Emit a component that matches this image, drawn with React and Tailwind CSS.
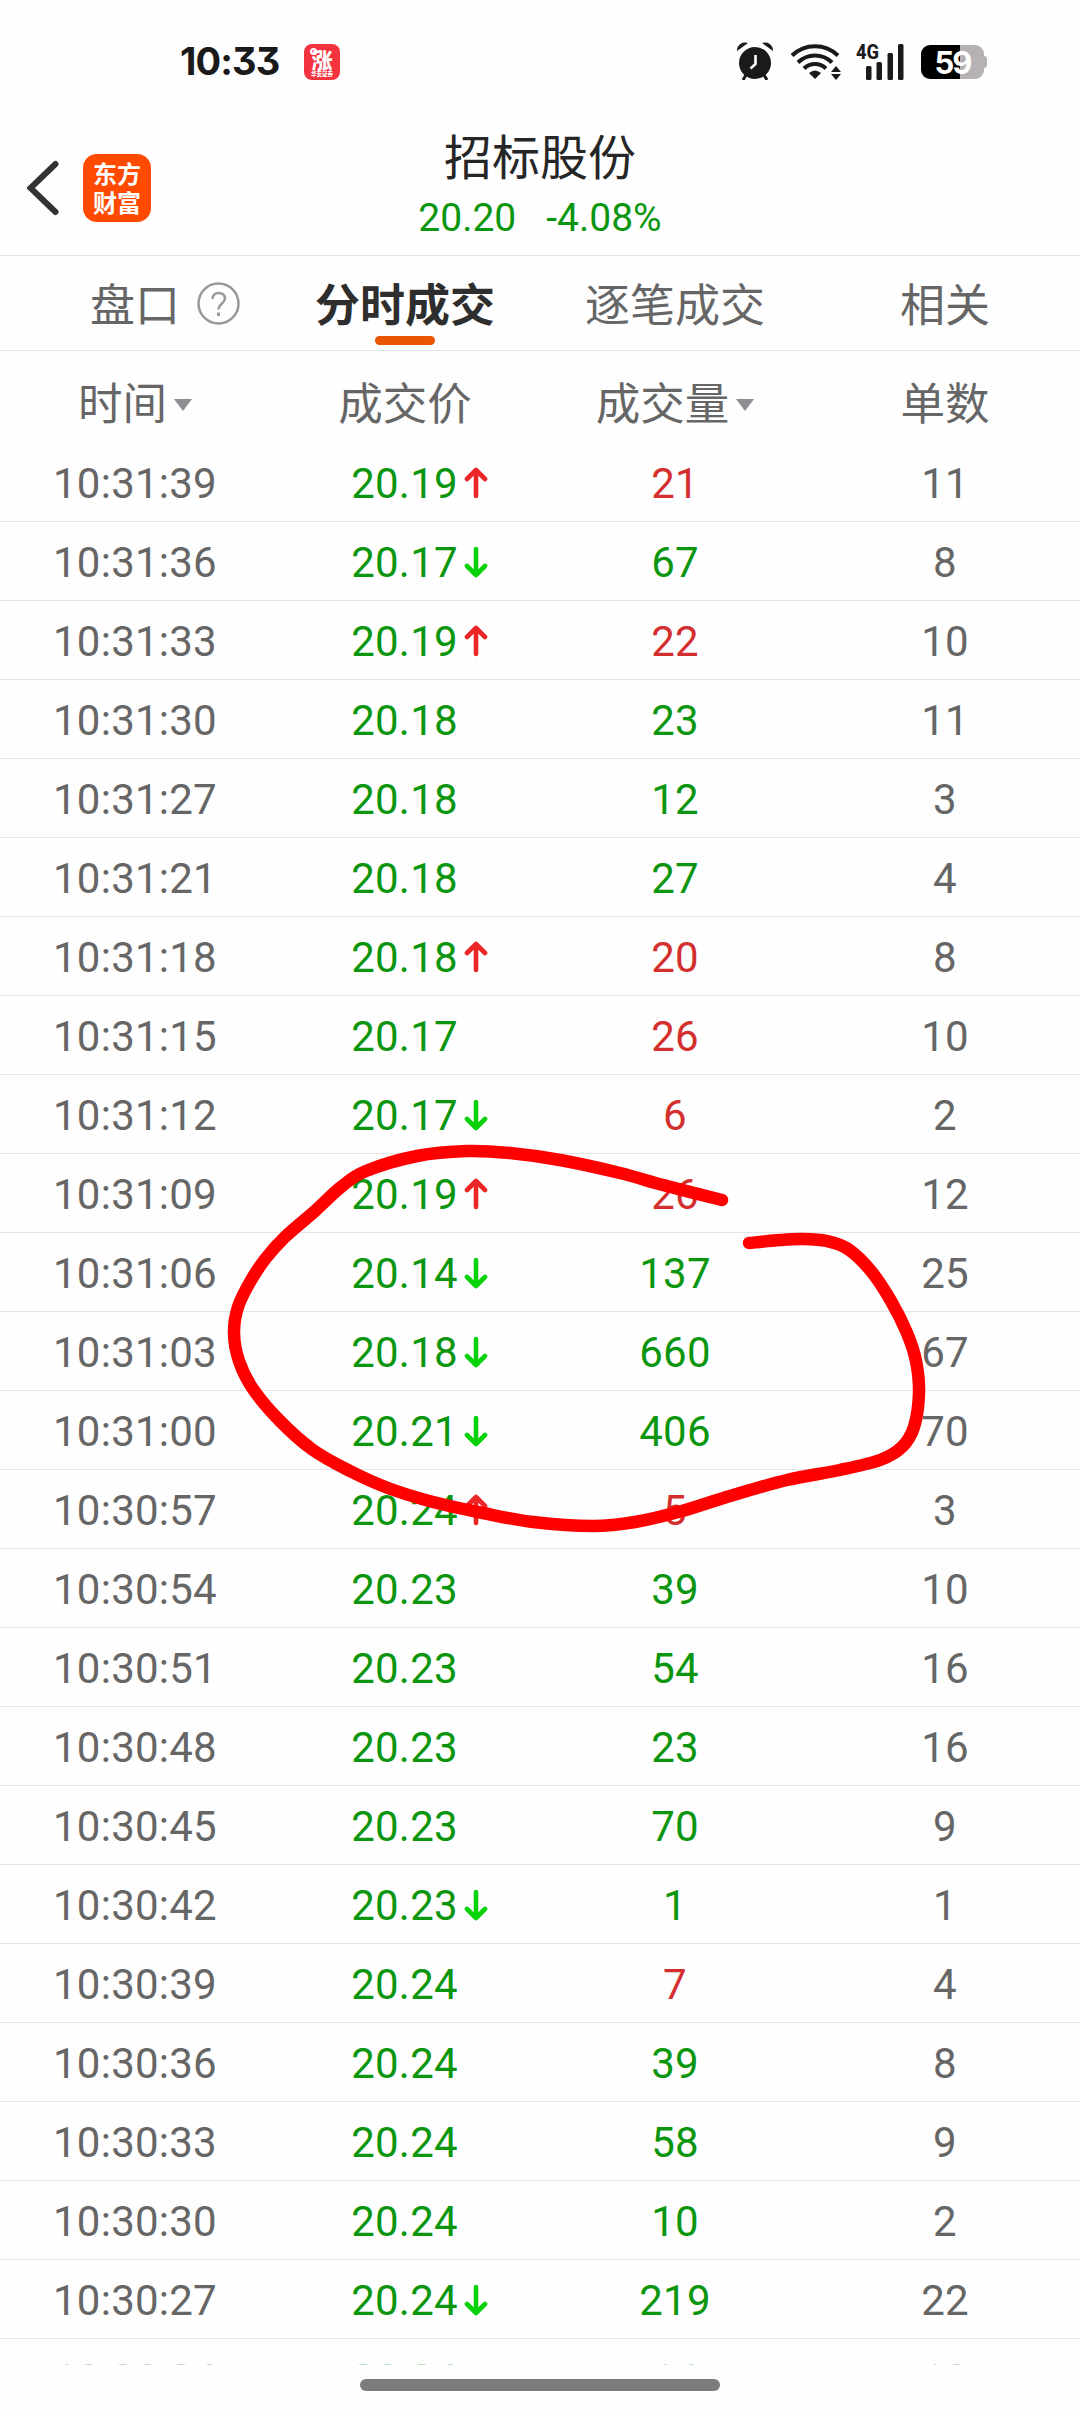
const TRADES = [
    { time: "10:31:39", price: "20.19", dir: "up", volume: 21, side: "buy", orders: 11 },
    { time: "10:31:36", price: "20.17", dir: "down", volume: 67, side: "sell", orders: 8 },
    { time: "10:31:33", price: "20.19", dir: "up", volume: 22, side: "buy", orders: 10 },
    { time: "10:31:30", price: "20.18", volume: 23, side: "sell", orders: 11 },
    { time: "10:31:27", price: "20.18", volume: 12, side: "sell", orders: 3 },
    { time: "10:31:21", price: "20.18", volume: 27, side: "sell", orders: 4 },
    { time: "10:31:18", price: "20.18", dir: "up", volume: 20, side: "buy", orders: 8 },
    { time: "10:31:15", price: "20.17", volume: 26, side: "buy", orders: 10 },
    { time: "10:31:12", price: "20.17", dir: "down", volume: 6, side: "buy", orders: 2 },
    { time: "10:31:09", price: "20.19", dir: "up", volume: 26, side: "buy", orders: 12 },
    { time: "10:31:06", price: "20.14", dir: "down", volume: 137, side: "sell", orders: 25 },
    { time: "10:31:03", price: "20.18", dir: "down", volume: 660, side: "sell", orders: 67 },
    { time: "10:31:00", price: "20.21", dir: "down", volume: 406, side: "sell", orders: 70 },
    { time: "10:30:57", price: "20.24", dir: "up", volume: 5, side: "buy", orders: 3 },
    { time: "10:30:54", price: "20.23", volume: 39, side: "sell", orders: 10 },
    { time: "10:30:51", price: "20.23", volume: 54, side: "sell", orders: 16 },
    { time: "10:30:48", price: "20.23", volume: 23, side: "sell", orders: 16 },
    { time: "10:30:45", price: "20.23", volume: 70, side: "sell", orders: 9 },
    { time: "10:30:42", price: "20.23", dir: "down", volume: 1, side: "sell", orders: 1 },
    { time: "10:30:39", price: "20.24", volume: 7, side: "buy", orders: 4 },
    { time: "10:30:36", price: "20.24", volume: 39, side: "sell", orders: 8 },
    { time: "10:30:33", price: "20.24", volume: 58, side: "sell", orders: 9 },
    { time: "10:30:30", price: "20.24", volume: 10, side: "sell", orders: 2 },
    { time: "10:30:27", price: "20.24", dir: "down", volume: 219, side: "sell", orders: 22 },
    { time: "10:30:24", price: "20.24", volume: 14, side: "sell", orders: 10 },
];

// hand-drawn loop around the large sell orders
const MARKER_POINTS = [
    [722, 1200], [663, 1185], [620, 1173], [560, 1160], [510, 1153], [467, 1151], [417, 1156], [366, 1171],
    [341, 1187], [315, 1211], [285, 1237], [266, 1258], [250, 1282], [238, 1307], [234, 1333], [239, 1361],
    [253, 1389], [280, 1421], [313, 1450], [350, 1471], [388, 1488], [433, 1502], [483, 1513], [533, 1522],
    [593, 1526], [635, 1522], [682, 1511], [730, 1496], [787, 1480], [840, 1470], [880, 1460], [902, 1447],
    [914, 1427], [919, 1393], [916, 1361], [907, 1333], [891, 1301], [871, 1271], [848, 1249], [827, 1241],
    [803, 1239], [780, 1240], [749, 1243],
];

// Catmull-Rom through the points
const smoothPath = (pts) => {
    let d = `M${pts[0][0]} ${pts[0][1]}`;
    for (let i = 0; i < pts.length - 1; i++) {
        const p0 = pts[i - 1] || pts[i];
        const p1 = pts[i];
        const p2 = pts[i + 1];
        const p3 = pts[i + 2] || p2;
        d += `C${p1[0] + (p2[0] - p0[0]) / 6} ${p1[1] + (p2[1] - p0[1]) / 6} ${p2[0] - (p3[0] - p1[0]) / 6} ${p2[1] - (p3[1] - p1[1]) / 6} ${p2[0]} ${p2[1]}`;
    }
    return d;
};

export default function App() {
    return (
        <div className="relative flex h-[2412px] w-[1080px] flex-col overflow-hidden bg-[#fefefe] font-['Roboto','Noto_Sans_CJK_SC',sans-serif] text-[#666]">
            <StatusBar />
            <TitleBar />
            <Tabs />
            <TableHead />
            <main className="h-[1922px] shrink-0 overflow-hidden">
                {TRADES.map(trade => (
                    <TradeRow key={trade.time} trade={trade} />
                ))}
            </main>
            <HomeIndicator />
            <Marker />
        </div>
    );
}

const StatusBar = () => (
    <div className="flex h-[122px] items-center justify-between pl-[180px] pr-[93px] text-[#1a1a1a]">
        <div className="flex items-center">
            <span className="w-[124px] text-[38px] leading-none font-bold tracking-[-0.9px] font-['Inter',sans-serif] [font-feature-settings:'cv09']">10:33</span>
            <span className="relative mt-0.5 flex h-9 w-9 flex-col items-center justify-center rounded-lg bg-[#f5333f] font-['Noto_Sans_CJK_SC',sans-serif] text-white">
                <span className="absolute top-1 left-1.5 h-[7px] w-[7px] rounded-full border-2 border-white"></span>
                <span className="text-[21px] leading-[24px] font-black">涨</span>
                <span className="text-[5.5px] leading-[7px] font-black">华安证券</span>
            </span>
        </div>
        <div className="flex items-center">
            <svg className="h-[38px] w-[38px]" viewBox="0 0 38 38" fill="none">
                <circle cx="19" cy="21" r="16" fill="#1a1a1a" />
                <path d="M1 9a8 8 0 0 1 11-8zM37 9A8 8 0 0 0 26 1z" fill="#1a1a1a" />
                <path d="m10 33-3 5M28 33l3 5" stroke="#1a1a1a" strokeWidth="3" />
                <path d="M19.5 13v9l-5 4.5" stroke="#fff" strokeWidth="2.6" />
            </svg>
            <svg className="ml-4 h-[38px] w-[52px]" viewBox="0 0 52 38" fill="none">
                <path d="M2 13.5a33 33 0 0 1 46 0M8 20.5a24 24 0 0 1 34 0M14 26.5a16 16 0 0 1 22 0" stroke="#1a1a1a" strokeWidth="4" />
                <path d="m25 37-6-6q6-5 12 0zM46 24l5 6H41zM46 38l5-6H41z" fill="#1a1a1a" />
            </svg>
            <svg className="ml-3.5 h-[38px] w-[48px] overflow-visible" viewBox="0 0 48 38">
                <text x="0" y="16.5" fontSize="21" fontWeight="800" textLength="23" lengthAdjust="spacingAndGlyphs" fill="#1a1a1a">4G</text>
                <rect x="10" y="24" width="5.5" height="14" rx="1.5" fill="#1a1a1a" />
                <rect x="20.5" y="20" width="5.5" height="18" rx="1.5" fill="#1a1a1a" />
                <rect x="31.5" y="11" width="5.5" height="27" rx="1.5" fill="#1a1a1a" />
                <rect x="42" y="2" width="5.5" height="36" rx="1.5" fill="#1a1a1a" />
            </svg>
            <div className="mt-0.5 ml-[17px] flex items-center">
                <span className="flex h-[34px] w-[63px] items-center justify-center rounded-[9px] bg-linear-to-r from-black from-62% to-[#b5b1b5] to-62% font-['Inter',sans-serif] text-[31px] leading-none font-bold tracking-[-2px] text-white">59</span>
                <span className="h-3 w-[3px] rounded-r bg-[#b5b1b5]"></span>
            </div>
        </div>
    </div>
);

const TitleBar = () => (
    <header className="grid h-[134px] shrink-0 grid-cols-3 border-b border-[#e4e4e4]">
        <div className="flex items-center pl-[27px]">
            <svg className="mb-[2px] h-[56px] w-[32px]" viewBox="0 0 32 56" fill="none" stroke="#333" strokeWidth="6" strokeLinecap="round">
                <path d="M28.5 4 3.5 28l25 24" />
            </svg>
            <div className="mb-[2px] ml-6 flex h-[68px] w-[68px] flex-col items-center justify-center rounded-[14px] bg-[#ff4a00] pb-0.5 font-['Noto_Sans_CJK_SC',sans-serif] text-[24px] leading-[29px] font-bold text-white">
                <span>东方</span>
                <span>财富</span>
            </div>
        </div>
        <div className="flex flex-col items-center">
            <h1 className="mt-[6px] text-[48px] leading-[62px] text-[#262626]">招标股份</h1>
            <div className="flex gap-[30px] text-[39px] leading-[56px] text-[#0c960f]">
                <span>20.20</span>
                <span>-4.08%</span>
            </div>
        </div>
    </header>
);

const Tabs = () => (
    <nav className="grid h-[95px] shrink-0 grid-cols-4 border-b border-[#e4e4e4] text-[45px] leading-[101px]">
        <div className="flex items-center justify-center gap-[17px] pl-[60px]">
            <span className="shrink-0">盘口</span>
            <svg className="mb-1.5 h-[43px] w-[43px] shrink-0" viewBox="0 0 43 43" fill="none" stroke="#999" strokeWidth="2.5">
                <circle cx="21.5" cy="21.5" r="20" />
                <path d="M15.5 17c0-8 12.5-8 12.5-.5 0 5-6.5 5-6.5 11" />
                <path d="M21.5 30.5v3.5" strokeWidth="3" />
            </svg>
        </div>
        <div className="relative text-center font-bold text-[#2e2e2e]">
            分时成交
            <span className="absolute top-[80px] left-[105px] h-[9px] w-[60px] rounded-full bg-[#ea5504]"></span>
        </div>
        <div className="text-center">逐笔成交</div>
        <div className="text-center">相关</div>
    </nav>
);

const TableHead = () => (
    <div className="grid h-[92px] shrink-0 grid-cols-4 text-[44.5px] leading-[109px]">
        <div className="flex items-center justify-center gap-[7px]">
            时间 <SortCaret />
        </div>
        <div className="text-center">成交价</div>
        <div className="flex items-center justify-center gap-[7px]">
            成交量 <SortCaret />
        </div>
        <div className="text-center">单数</div>
    </div>
);

const SortCaret = () => (
    <svg className="mb-0.5 h-3 w-[18px]" viewBox="0 0 18 12">
        <path d="M0 0h18L9 12z" fill="#8e8e93" />
    </svg>
);

const TradeRow = ({ trade }) => (
    <div className="grid h-[79px] grid-cols-4 border-b border-[#e4e4e4] text-center text-[42px] leading-[81px] tracking-[0.25px] last:opacity-30">
        <div>{trade.time}</div>
        <div className="pr-px text-[#0c960f]">
            <span className="relative">
                {trade.price}
                {trade.dir && <DirectionArrow dir={trade.dir} />}
            </span>
        </div>
        <div className={trade.side === "buy" ? "text-[#d32f2f]" : "text-[#0c960f]"}>{trade.volume}</div>
        <div>{trade.orders}</div>
    </div>
);

const DirectionArrow = ({ dir }) => (
    <svg
        className={`absolute top-2 left-full ml-[6px] h-8 w-6 ${dir === "up" ? "text-[#ec2626]" : "rotate-180 text-[#0ad20a]"}`}
        viewBox="0 0 24 32"
        fill="none"
        stroke="currentColor"
        strokeWidth="4.6"
        strokeLinecap="round"
        strokeLinejoin="round"
    >
        <path d="M12 29V3M3 12l9-9 9 9" />
    </svg>
);

const HomeIndicator = () => (
    <footer className="flex flex-1 items-end justify-center pb-[21px]">
        <span className="h-3 w-[360px] rounded-full bg-[#7c7d7a]"></span>
    </footer>
);

const Marker = () => (
    <svg className="pointer-events-none absolute inset-0 h-full w-full" viewBox="0 0 1080 2412" fill="none">
        <path
            d={smoothPath(MARKER_POINTS)}
            stroke="#fe0000"
            strokeWidth="12.5"
            strokeLinecap="round"
            strokeLinejoin="round"
        />
    </svg>
);
